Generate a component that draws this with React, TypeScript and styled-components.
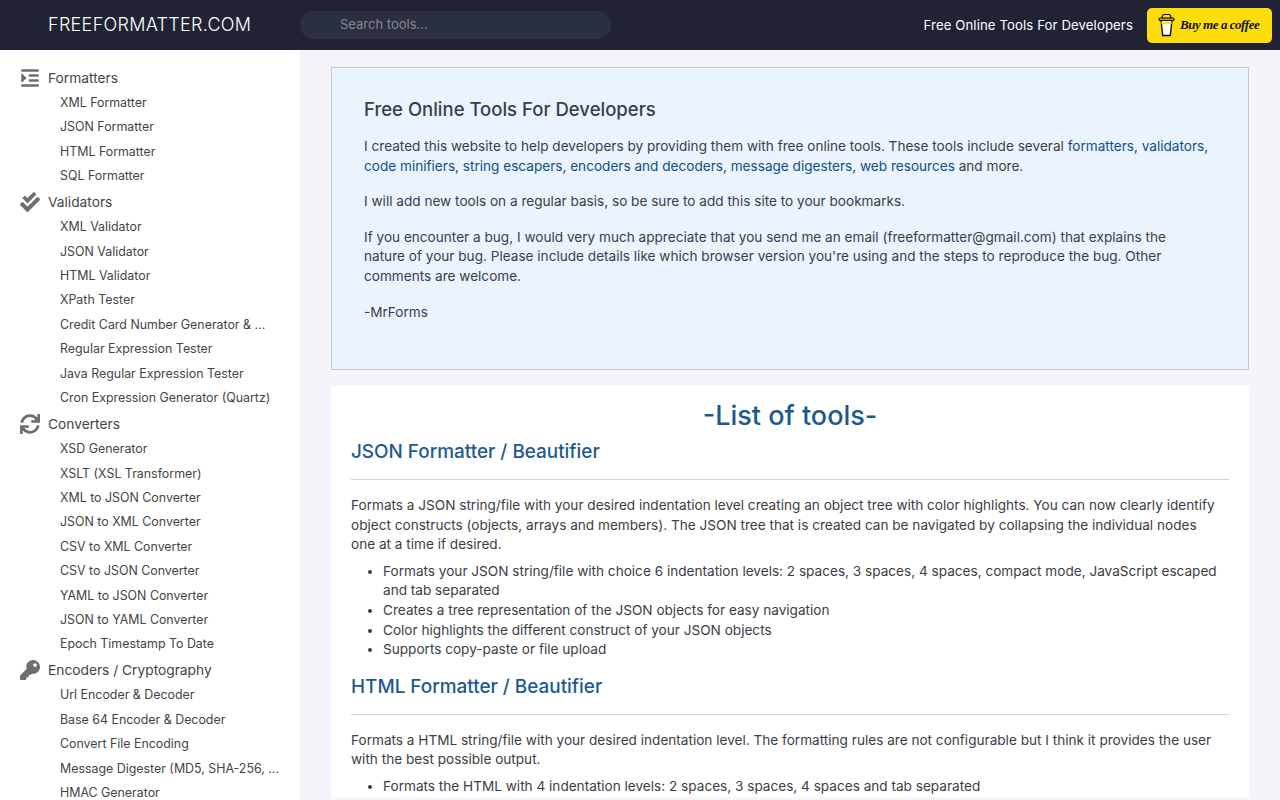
import React from 'react';
import styled, { createGlobalStyle } from 'styled-components';
import { FaIndent, FaCheckDouble, FaSync, FaKey } from 'react-icons/fa';

const FONT = '"Inter", "Open Sans", "Liberation Sans", sans-serif';

const nav = [
  {
    title: 'Formatters',
    icon: <FaIndent />,
    items: ['XML Formatter', 'JSON Formatter', 'HTML Formatter', 'SQL Formatter'],
  },
  {
    title: 'Validators',
    icon: <FaCheckDouble />,
    items: [
      'XML Validator',
      'JSON Validator',
      'HTML Validator',
      'XPath Tester',
      'Credit Card Number Generator & ...',
      'Regular Expression Tester',
      'Java Regular Expression Tester',
      'Cron Expression Generator (Quartz)',
    ],
  },
  {
    title: 'Converters',
    icon: <FaSync />,
    items: [
      'XSD Generator',
      'XSLT (XSL Transformer)',
      'XML to JSON Converter',
      'JSON to XML Converter',
      'CSV to XML Converter',
      'CSV to JSON Converter',
      'YAML to JSON Converter',
      'JSON to YAML Converter',
      'Epoch Timestamp To Date',
    ],
  },
  {
    title: 'Encoders / Cryptography',
    icon: <FaKey />,
    items: [
      'Url Encoder & Decoder',
      'Base 64 Encoder & Decoder',
      'Convert File Encoding',
      'Message Digester (MD5, SHA-256, ...',
      'HMAC Generator',
    ],
  },
];

const CoffeeCup = () => (
  <svg width="17" height="24" viewBox="0 0 17 24">
    <path d="M3 7h11l-1.700 15.500H4.700z" fill="#fff" stroke="#111" strokeWidth="1.400" />
    <path d="M3.200 9h10.600l-.2 2H3.400z" fill="#ffdd0d" />
    <rect x="1" y="5" width="15" height="2.400" rx="1" fill="#ffdd0d" stroke="#111" strokeWidth="1.200" />
    <path d="M4 5l.6-2.500c.1-.6.500-1 1-1h5.800c.5 0 .9.400 1 1L13 5z" fill="#ffdd0d" stroke="#111" strokeWidth="1.200" />
  </svg>
);

const App: React.FC = () => {
  return (
    <>
      <GlobalStyle />
      <Page>
        <Header>
          <Logo>FREEFORMATTER.COM</Logo>
          <SearchInput placeholder="Search tools..." />
          <Tagline>Free Online Tools For Developers</Tagline>
          <CoffeeButton>
            <CoffeeCup />
            <CoffeeText>Buy me a coffee</CoffeeText>
          </CoffeeButton>
        </Header>
        <Body>
          <Sidebar>
            {nav.map((group) => (
              <Group key={group.title}>
                <GroupTitle>
                  <GroupIcon>{group.icon}</GroupIcon>
                  {group.title}
                </GroupTitle>
                {group.items.map((item) => (
                  <NavItem key={item}>{item}</NavItem>
                ))}
              </Group>
            ))}
          </Sidebar>
          <Main>
            <IntroBox>
              <IntroTitle>Free Online Tools For Developers</IntroTitle>
              <IntroText>
                I created this website to help developers by providing them with free online tools. These tools include
                several <Link>formatters</Link>, <Link>validators</Link>, <Link>code minifiers</Link>,{' '}
                <Link>string escapers</Link>, <Link>encoders and decoders</Link>, <Link>message digesters</Link>,{' '}
                <Link>web resources</Link> and more.
              </IntroText>
              <IntroText>I will add new tools on a regular basis, so be sure to add this site to your bookmarks.</IntroText>
              <IntroText>
                If you encounter a bug, I would very much appreciate that you send me an email (freeformatter@gmail.com)
                that explains the
                <br />
                nature of your bug. Please include details like which browser version you're using and the steps to
                reproduce the bug. Other
                <br />
                comments are welcome.
              </IntroText>
              <IntroText>-MrForms</IntroText>
            </IntroBox>
            <ToolsPanel>
              <ToolsTitle>-List of tools-</ToolsTitle>
              <ToolHeading>JSON Formatter / Beautifier</ToolHeading>
              <Rule />
              <ToolText>
                Formats a JSON string/file with your desired indentation level creating an object tree with color
                highlights. You can now clearly identify object constructs (objects, arrays and members). The JSON tree
                that is created can be navigated by collapsing the individual nodes
                <br />
                one at a time if desired.
              </ToolText>
              <ToolList>
                <li>
                  Formats your JSON string/file with choice 6 indentation levels: 2 spaces, 3 spaces, 4 spaces, compact
                  mode, JavaScript escaped and tab separated
                </li>
                <li>Creates a tree representation of the JSON objects for easy navigation</li>
                <li>Color highlights the different construct of your JSON objects</li>
                <li>Supports copy-paste or file upload</li>
              </ToolList>
              <ToolHeading>HTML Formatter / Beautifier</ToolHeading>
              <Rule />
              <ToolText>
                Formats a HTML string/file with your desired indentation level. The formatting rules are not configurable
                but I think it provides the user with the best possible output.
              </ToolText>
              <ToolList>
                <li>Formats the HTML with 4 indentation levels: 2 spaces, 3 spaces, 4 spaces and tab separated</li>
              </ToolList>
            </ToolsPanel>
          </Main>
        </Body>
      </Page>
    </>
  );
};

const GlobalStyle = createGlobalStyle`
  html, body {
    margin: 0;
    padding: 0;
    height: 100%;
    overflow: hidden;
  }
  body {
    font-family: ${FONT};
    color: #3a3d45;
  }
`;

const Page = styled.div`
  display: flex;
  flex-direction: column;
  height: 100vh;
`;

const Header = styled.header`
  flex: 0 0 50px;
  display: flex;
  align-items: center;
  padding: 0 8px 0 48px;
  background: #1f2333;
  color: #fff;
`;

const Logo = styled.div`
  width: 252px;
  margin-top: -2px;
  font-size: 18px;
  font-weight: 300;
  letter-spacing: 0.3px;
  white-space: nowrap;
`;

const SearchInput = styled.input`
  width: 311px;
  height: 28px;
  box-sizing: border-box;
  padding: 0 0 2px 40px;
  border: none;
  border-radius: 14px;
  background: #2a2f41;
  font-family: ${FONT};
  font-size: 13px;
  color: #fff;
  outline: none;
  &::placeholder {
    color: #85888f;
    opacity: 1;
  }
`;

const Tagline = styled.div`
  margin-left: auto;
  margin-right: 14px;
  margin-top: -1px;
  font-size: 13.200px;
  letter-spacing: 0.1px;
  white-space: nowrap;
`;

const CoffeeButton = styled.a`
  width: 125px;
  height: 35px;
  box-sizing: border-box;
  display: flex;
  align-items: center;
  gap: 5px;
  padding-left: 11px;
  border-radius: 5px;
  background: #ffdd0d;
`;

const CoffeeText = styled.span`
  font-family: 'Liberation Serif', serif;
  font-style: italic;
  font-weight: 700;
  font-size: 13px;
  letter-spacing: -0.45px;
  color: #111;
  white-space: nowrap;
`;

const Body = styled.div`
  flex: 1;
  display: flex;
  min-height: 0;
`;

const Sidebar = styled.nav`
  flex: 0 0 300px;
  box-sizing: border-box;
  padding-top: 14.400px;
  background: #fff;
  overflow: hidden;
`;

const Group = styled.div`
  margin-bottom: 0.3px;
`;

const GroupTitle = styled.div`
  display: flex;
  align-items: center;
  height: 26.500px;
  padding-left: 20px;
  font-size: 13.750px;
  color: #444;
`;

const GroupIcon = styled.span`
  flex: 0 0 28px;
  display: flex;
  align-items: center;
  font-size: 20px;
  color: #6e6e6e;
`;

const NavItem = styled.div`
  height: 24.400px;
  line-height: 24.400px;
  padding-left: 60px;
  font-size: 12.400px;
  color: #444;
  white-space: nowrap;
`;

const Main = styled.main`
  flex: 1;
  min-width: 0;
  box-sizing: border-box;
  padding: 17px 31px 0;
  background: #f5f5f9;
  overflow: hidden;
`;

const IntroBox = styled.section`
  box-sizing: border-box;
  height: 303px;
  padding: 29px 32px 0;
  border: 1px solid #c5c8d0;
  background: #eaf3fe;
`;

const IntroTitle = styled.h2`
  margin: 0 0 16px;
  font-size: 18.500px;
  font-weight: 500;
  line-height: 24px;
  color: #3a3d45;
`;

const IntroText = styled.p`
  margin: 0 0 16px;
  font-size: 13.600px;
  line-height: 19.600px;
`;

const Link = styled.a`
  color: #0f4f85;
`;

const ToolsPanel = styled.section`
  margin-top: 16px;
  padding: 12px 20px 0;
  background: #fff;
`;

const ToolsTitle = styled.h1`
  margin: 0;
  text-align: center;
  font-size: 27px;
  font-weight: 500;
  line-height: 36px;
  color: #1d5a8f;
`;

const ToolHeading = styled.h3`
  margin: 4px 0 0;
  font-size: 18.900px;
  font-weight: 500;
  line-height: 28px;
  color: #1d5a8f;
`;

const Rule = styled.hr`
  margin: 13px 0 16px;
  border: none;
  border-top: 1px solid #d0d2d6;
`;

const ToolText = styled.p`
  margin: 0 0 7px;
  font-size: 13.600px;
  line-height: 19.600px;
`;

const ToolList = styled.ul`
  margin: 0 0 13px;
  padding-left: 32px;
  font-size: 13.600px;
  line-height: 19.600px;
`;

export default App;
